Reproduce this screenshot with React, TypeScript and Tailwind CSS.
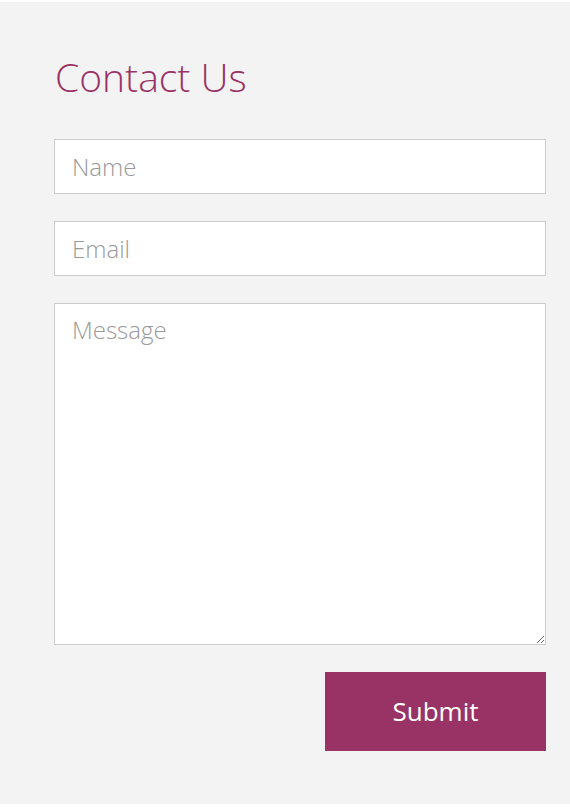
const ContactForm = () => {
  return (
    <div className="bg-white pt-[2px] min-h-screen">
      <div
        className="bg-[#f3f3f3] pl-[54px] pr-[24px] pt-[51px] pb-[53px]"
        style={{ fontFamily: '"Open Sans", "Liberation Sans", sans-serif' }}
      >
        <h2 className="text-[39px] leading-[48px] font-light text-[#993366] mb-[38px] pl-[1px]">
          Contact Us
        </h2>
        <form className="flex flex-col w-[492px]" onSubmit={(e) => e.preventDefault()}>
          <input
            type="text"
            placeholder="Name"
            className="h-[55px] bg-white border border-[#cccccc] px-[17px] text-[24px] font-light text-[#333] placeholder:text-[#999] outline-none"
          />
          <input
            type="email"
            placeholder="Email"
            className="mt-[27px] h-[55px] bg-white border border-[#cccccc] px-[17px] text-[24px] font-light text-[#333] placeholder:text-[#999] outline-none"
          />
          <textarea
            placeholder="Message"
            className="mt-[27px] h-[342px] bg-white border border-[#cccccc] px-[17px] pt-[8px] pb-[10px] text-[24px] font-light text-[#333] placeholder:text-[#999] outline-none"
          />
          <div className="flex justify-end mt-[27px]">
            <button
              type="submit"
              className="w-[221px] h-[79px] bg-[#993366] text-white text-[26px]"
            >
              Submit
            </button>
          </div>
        </form>
      </div>
    </div>
  );
};

export default function App() {
  return <ContactForm />;
}
